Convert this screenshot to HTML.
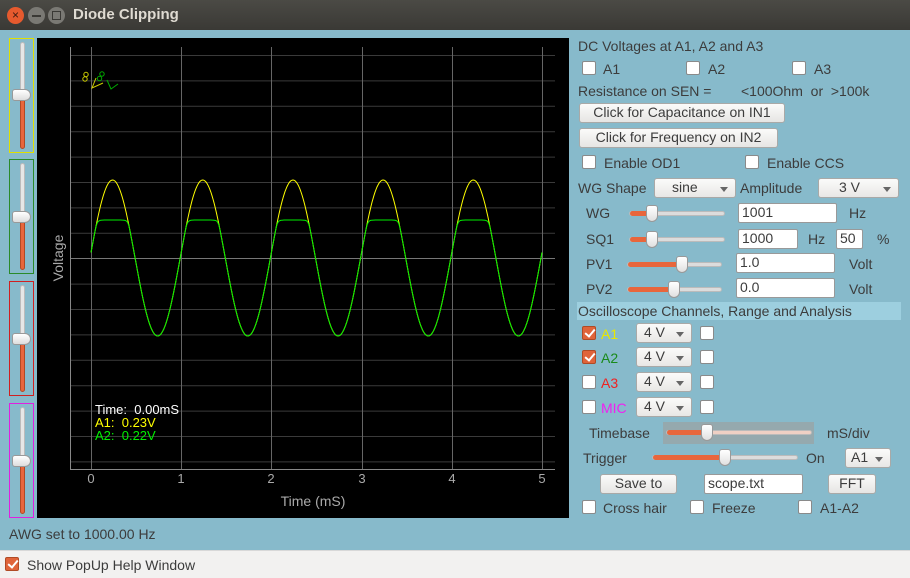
<!DOCTYPE html>
<html><head><meta charset="utf-8"><style>
*{box-sizing:border-box;margin:0;padding:0}
body{width:910px;height:578px;overflow:hidden;background:#87bacb;font-family:"Liberation Sans","DejaVu Sans",sans-serif;font-size:14px;color:#3c3c3c;position:relative}
.a{position:absolute;white-space:nowrap}
.t{position:absolute;white-space:nowrap;line-height:16px}
.cb{position:absolute;width:14px;height:14px;background:#fff;border:1px solid #8a8a8a;border-radius:2px}
.cb.on{background:#e0643a;border-color:#b04a25}
.cb.on:after{content:"";position:absolute;left:4px;top:0px;width:4px;height:8px;border:solid #fff;border-width:0 2px 2px 0;transform:rotate(40deg)}
.btn{position:absolute;background:linear-gradient(#fbfbfa,#e6e5e3);border:1px solid #a9a9a7;border-radius:3px;text-align:center;line-height:17px}
.ent{position:absolute;background:#fff;border:1px solid #999;border-radius:2px;line-height:17px;padding-left:3px}
.cmb{position:absolute;background:linear-gradient(#fbfbfa,#e8e7e5);border:1px solid #a9a9a7;border-radius:3px;line-height:17px}
.cmb:after{content:"";position:absolute;right:7px;top:8px;border:4px solid transparent;border-top:5px solid #666}
.hs{position:absolute;height:5px;background:#dcdcdc;border-radius:3px;border:1px solid #bbb}
.hs i{position:absolute;left:0;top:-1px;height:5px;background:#e8663c;border-radius:3px}
.hs b{position:absolute;top:-7px;width:12px;height:17px;background:linear-gradient(#fff,#e0e0e0);border:1px solid #999;border-radius:3px 3px 6px 6px}
.vs{position:absolute;left:9px;width:25px;height:115px;border:1px solid}
.vs .g{position:absolute;left:10px;top:3px;width:5px;bottom:3px;background:#e6e6e6;border:1px solid #bbb;border-radius:3px}
.vs .o{position:absolute;left:10px;width:5px;bottom:3px;background:#e8663c;border:1px solid #b04a25;border-radius:3px}
.vs .h{position:absolute;left:2px;width:19px;height:12px;background:linear-gradient(#fff,#ddd);border:1px solid #999;border-radius:3px 6px 6px 3px}
</style></head><body>
<div class="a" style="left:0;top:0;width:910px;height:30px;background:linear-gradient(#4b4a45,#3a3935);"></div>
<div class="a" style="left:7px;top:7px;width:17px;height:17px;border-radius:50%;background:#e65a2e;color:#3a1a10;font-size:12px;line-height:17px;text-align:center">×</div>
<div class="a" style="left:28px;top:7px;width:17px;height:17px;border-radius:50%;background:#7a7974"><div style="position:absolute;left:4px;top:8px;width:9px;height:2px;background:#3a3935"></div></div>
<div class="a" style="left:48px;top:7px;width:17px;height:17px;border-radius:50%;background:#7a7974"><div style="position:absolute;left:4px;top:4px;width:9px;height:9px;border:1.5px solid #3a3935"></div></div>
<div class="t" style="left:73px;top:7px;color:#dfdbd2;font-weight:bold;font-size:15px">Diode Clipping</div>

<div class="vs" style="top:38px;border-color:#e0e000"><div class="g"></div><div class="o" style="top:56px"></div><div class="h" style="top:50px"></div></div>
<div class="vs" style="top:159px;border-color:#2a8a2a"><div class="g"></div><div class="o" style="top:56px"></div><div class="h" style="top:51px"></div></div>
<div class="vs" style="top:281px;border-color:#d02020"><div class="g"></div><div class="o" style="top:56px"></div><div class="h" style="top:51px"></div></div>
<div class="vs" style="top:403px;border-color:#e020e0"><div class="g"></div><div class="o" style="top:56px"></div><div class="h" style="top:51px"></div></div>

<svg class="a" style="left:37px;top:38px" width="532" height="480" viewBox="37 38 532 480">
<rect x="37" y="38" width="532" height="480" fill="#000"/>
<g id="grid" stroke="#3a3a3a" stroke-width="1"></g>
<g stroke="#888" stroke-width="1">
<line x1="70.5" y1="47" x2="70.5" y2="469"/>
<line x1="70" y1="469.5" x2="555" y2="469.5"/>
<line x1="71" y1="258.5" x2="555" y2="258.5" stroke="#777"/>
</g>
<polyline id="y1" fill="none" stroke="#ffff00" stroke-width="1"/>
<polyline id="y2" fill="none" stroke="#00ee00" stroke-width="1"/>
<g fill="#aaa" font-size="13" font-family="Liberation Sans,sans-serif" text-anchor="middle">
<text x="91" y="483">0</text><text x="181" y="483">1</text><text x="271" y="483">2</text><text x="362" y="483">3</text><text x="452" y="483">4</text><text x="542" y="483">5</text>
<text x="313" y="506" font-size="14">Time (mS)</text>
<text transform="translate(63,258) rotate(-90)" font-size="14">Voltage</text>
</g>
<g font-size="13" font-family="Liberation Sans,sans-serif">
<text x="95" y="414" fill="#fff">Time:&#160;&#160;0.00mS</text>
<text x="95" y="427" fill="#ffff00">A1:&#160;&#160;0.23V</text>
<text x="95" y="440" fill="#00ee00">A2:&#160;&#160;0.22V</text>
</g>
<g fill="none" stroke-width="1">
<circle cx="86" cy="74.5" r="2.2" stroke="#cccc00"/><circle cx="85" cy="79" r="2.2" stroke="#cccc00"/>
<path d="M96 78 L92 88 L103 83" stroke="#cccc00"/>
<circle cx="102" cy="74" r="2.2" stroke="#00aa00"/><circle cx="99.5" cy="78.5" r="2.2" stroke="#00aa00"/>
<path d="M107 80 L111 89 L118 84" stroke="#00aa00"/>
</g>
</svg>
<script>
var g=document.getElementById('grid'),s='';
for(var k=0;k<17;k++){var y=55.5+k*25.4;if(Math.abs(y-258.5)<2)continue;s+='<line x1="71" y1="'+y+'" x2="555" y2="'+y+'"/>';}
for(var i=0;i<6;i++){var x=Math.round(91+i*90.2)+0.5;s+='<line x1="'+x+'" y1="47" x2="'+x+'" y2="469" stroke="#666"/>';}
g.innerHTML=s;
var p1='',p2='';
for(var x=91;x<=542;x+=1){var v=78*Math.sin(2*Math.PI*(x-91)/90.2+0.07);var y=258-v;p1+=x+','+y.toFixed(1)+' ';var v2=v<26?v:26+12*Math.tanh((v-26)/12);p2+=x+','+(258-v2).toFixed(1)+' ';}
document.getElementById('y1').setAttribute('points',p1);
document.getElementById('y2').setAttribute('points',p2);
</script>

<div class="t" style="left:578px;top:38px">DC Voltages at A1, A2 and A3</div>
<div class="cb" style="left:582px;top:61px"></div><div class="t" style="left:603px;top:61px">A1</div>
<div class="cb" style="left:686px;top:61px"></div><div class="t" style="left:708px;top:61px">A2</div>
<div class="cb" style="left:792px;top:61px"></div><div class="t" style="left:814px;top:61px">A3</div>
<div class="t" style="left:578px;top:83px">Resistance on SEN =</div>
<div class="t" style="left:741px;top:83px">&lt;100Ohm&nbsp; or&nbsp; &gt;100k</div>
<div class="btn" style="left:579px;top:103px;width:206px;height:20px">Click for Capacitance on IN1</div>
<div class="btn" style="left:579px;top:128px;width:199px;height:20px">Click for Frequency on IN2</div>
<div class="cb" style="left:582px;top:155px"></div><div class="t" style="left:604px;top:155px">Enable OD1</div>
<div class="cb" style="left:745px;top:155px"></div><div class="t" style="left:767px;top:155px">Enable CCS</div>
<div class="t" style="left:578px;top:180px">WG Shape</div>
<div class="cmb" style="left:654px;top:178px;width:82px;height:20px;padding-left:17px">sine</div>
<div class="t" style="left:740px;top:180px">Amplitude</div>
<div class="cmb" style="left:818px;top:178px;width:81px;height:20px;padding-left:20px">3 V</div>

<div class="t" style="left:586px;top:205px">WG</div>
<div class="hs" style="left:629px;top:211px;width:96px"><i style="width:24px"></i><b style="left:16px"></b></div>
<div class="ent" style="left:738px;top:203px;width:99px;height:20px">1001</div>
<div class="t" style="left:849px;top:205px">Hz</div>
<div class="t" style="left:586px;top:231px">SQ1</div>
<div class="hs" style="left:629px;top:237px;width:96px"><i style="width:24px"></i><b style="left:16px"></b></div>
<div class="ent" style="left:738px;top:229px;width:60px;height:20px">1000</div>
<div class="t" style="left:808px;top:231px">Hz</div>
<div class="ent" style="left:836px;top:229px;width:27px;height:20px">50</div>
<div class="t" style="left:877px;top:231px">%</div>
<div class="t" style="left:586px;top:256px">PV1</div>
<div class="hs" style="left:627px;top:262px;width:95px"><i style="width:54px"></i><b style="left:48px"></b></div>
<div class="ent" style="left:736px;top:253px;width:99px;height:20px">1.0</div>
<div class="t" style="left:849px;top:256px">Volt</div>
<div class="t" style="left:586px;top:281px">PV2</div>
<div class="hs" style="left:627px;top:287px;width:95px"><i style="width:46px"></i><b style="left:40px"></b></div>
<div class="ent" style="left:736px;top:278px;width:99px;height:20px">0.0</div>
<div class="t" style="left:849px;top:281px">Volt</div>

<div class="a" style="left:577px;top:302px;width:324px;height:18px;background:#9dcfdf"></div>
<div class="t" style="left:578px;top:303px">Oscilloscope Channels, Range and Analysis</div>

<div class="cb on" style="left:582px;top:326px"></div><div class="t" style="left:601px;top:326px;color:#e8e800">A1</div>
<div class="cmb" style="left:636px;top:323px;width:56px;height:20px;padding-left:7px">4 V</div><div class="cb" style="left:700px;top:326px"></div>
<div class="cb on" style="left:582px;top:350px"></div><div class="t" style="left:601px;top:350px;color:#1a8a1a">A2</div>
<div class="cmb" style="left:636px;top:347px;width:56px;height:20px;padding-left:7px">4 V</div><div class="cb" style="left:700px;top:350px"></div>
<div class="cb" style="left:582px;top:375px"></div><div class="t" style="left:601px;top:375px;color:#f02020">A3</div>
<div class="cmb" style="left:636px;top:372px;width:56px;height:20px;padding-left:7px">4 V</div><div class="cb" style="left:700px;top:375px"></div>
<div class="cb" style="left:582px;top:400px"></div><div class="t" style="left:601px;top:400px;color:#f020f0">MIC</div>
<div class="cmb" style="left:636px;top:397px;width:56px;height:20px;padding-left:7px">4 V</div><div class="cb" style="left:700px;top:400px"></div>

<div class="t" style="left:589px;top:425px;width:62px;overflow:hidden">Timebase</div>
<div class="a" style="left:663px;top:422px;width:151px;height:22px;background:#95a9ae"></div>
<div class="hs" style="left:666px;top:430px;width:146px;background:#efd0c4"><i style="width:40px"></i><b style="left:34px"></b></div>
<div class="t" style="left:827px;top:425px">mS/div</div>
<div class="t" style="left:583px;top:450px">Trigger</div>
<div class="hs" style="left:652px;top:455px;width:146px"><i style="width:72px"></i><b style="left:66px"></b></div>
<div class="t" style="left:806px;top:450px">On</div>
<div class="cmb" style="left:845px;top:448px;width:46px;height:20px;padding-left:5px">A1</div>
<div class="btn" style="left:600px;top:474px;width:77px;height:20px">Save to</div>
<div class="ent" style="left:704px;top:474px;width:99px;height:20px">scope.txt</div>
<div class="btn" style="left:828px;top:474px;width:48px;height:20px">FFT</div>
<div class="cb" style="left:582px;top:500px"></div><div class="t" style="left:603px;top:500px">Cross hair</div>
<div class="cb" style="left:690px;top:500px"></div><div class="t" style="left:712px;top:500px">Freeze</div>
<div class="cb" style="left:798px;top:500px"></div><div class="t" style="left:820px;top:500px">A1-A2</div>

<div class="t" style="left:9px;top:526px">AWG set to 1000.00 Hz</div>
<div class="a" style="left:0;top:550px;width:910px;height:28px;background:#f2f1f0;border-top:1px solid #d8d8d8"></div>
<div class="cb on" style="left:5px;top:557px"></div>
<div class="t" style="left:27px;top:557px">Show PopUp Help Window</div>
</body></html>
